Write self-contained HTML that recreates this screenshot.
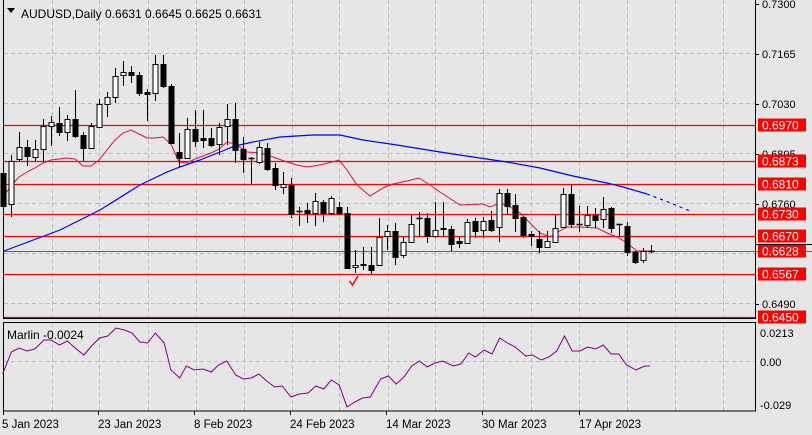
<!DOCTYPE html>
<html><head><meta charset="utf-8"><style>
html,body{margin:0;padding:0;background:#e6e6e6;}
svg{display:block;font-family:"Liberation Sans",sans-serif;}
</style></head><body>
<svg id="s" width="812" height="435" viewBox="0 0 812 435" xmlns="http://www.w3.org/2000/svg">
<rect x="0" y="0" width="812" height="435" fill="#e6e6e6"/>
<g id="grid" stroke="#bdbdbd" stroke-width="1" stroke-dasharray="4,3" fill="none"></g>
<g id="hl"></g>
<line x1="3" y1="251.5" x2="812" y2="251.5" stroke="#666" stroke-width="1"/>
<polyline id="blue" fill="none" stroke="#0000ff" stroke-width="1.2"/>
<polyline id="bluedash" fill="none" stroke="#0000ff" stroke-width="1.2" stroke-dasharray="3,4"/>
<polyline id="red" fill="none" stroke="#e0103c" stroke-width="1"/>
<g id="candles"></g>
<path d="M349.5 281 L352.5 285 L358 276" stroke="#ff0000" stroke-width="1.5" fill="none"/>
<rect x="3.5" y="-1" width="752" height="319.5" fill="none" stroke="#000" stroke-width="1"/>
<rect x="3.5" y="322.5" width="752" height="88.5" fill="none" stroke="#000" stroke-width="1"/>
<polyline id="marlin" fill="none" stroke="#800080" stroke-width="1"/>
<g id="labels" font-size="11" fill="#000"></g>
<path d="M7 8 L15 8 L11 13 Z" fill="#000"/>
<text x="21" y="18" font-size="12" fill="#000">AUDUSD,Daily  0.6631 0.6645 0.6625 0.6631</text>
<text x="7" y="339" font-size="12" fill="#000">Marlin -0.0024</text>
<g font-size="11.5" fill="#000">
<text x="2" y="428">5 Jan 2023</text>
<text x="98" y="428">23 Jan 2023</text>
<text x="194" y="428">8 Feb 2023</text>
<text x="290" y="428">24 Feb 2023</text>
<text x="386" y="428">14 Mar 2023</text>
<text x="482" y="428">30 Mar 2023</text>
<text x="579" y="428">17 Apr 2023</text>
</g>
</svg>
<script>
var NS="http://www.w3.org/2000/svg";
function el(t,a,p){var e=document.createElementNS(NS,t);for(var k in a)e.setAttribute(k,a[k]);if(p)p.appendChild(e);return e;}
var grid=document.getElementById('grid');
var vx=[52,99,148,196,244,292,339,388,435,483,531,579,627,675,723];
vx.forEach(function(x){el('line',{x1:x+.5,y1:0,x2:x+.5,y2:318},grid);el('line',{x1:x+.5,y1:323,x2:x+.5,y2:411},grid);});
[53,103,153,203,253,303].forEach(function(y){el('line',{x1:4,y1:y+.5,x2:755,y2:y+.5},grid);});
el('line',{x1:4,y1:361.5,x2:755,y2:361.5},grid);
var hl=document.getElementById('hl');
[125,161,184,214,236,274,317].forEach(function(y){el('line',{x1:4,y1:y+.5,x2:755,y2:y+.5,stroke:'#ff0000','stroke-width':1.3},hl);});
var lab=document.getElementById('labels');
[[4,'0.7300'],[54,'0.7165'],[104,'0.7030'],[154,'0.6895'],[204,'0.6760'],[304,'0.6490']].forEach(function(a){
el('line',{x1:755,y1:a[0]+.5,x2:759,y2:a[0]+.5,stroke:'#000'},lab);
var t=el('text',{x:762,y:a[0]+4},lab);t.textContent=a[1];});
[[125,'0.6970'],[161,'0.6873'],[184,'0.6810'],[214,'0.6730'],[236,'0.6670'],[251,'0.6628'],[274,'0.6567'],[317,'0.6450']].forEach(function(a){
el('rect',{x:758,y:a[0]-6.5,width:48,height:13,fill:'#ff0000'},lab);
var t=el('text',{x:762,y:a[0]+4.5,fill:'#fff','font-size':12},lab);t.textContent=a[1];});
el('line',{x1:755,y1:244.5,x2:812,y2:244.5,stroke:'#000'},lab);
[[333,'0.0213'],[362,'0.00'],[405,'-0.029']].forEach(function(a){var t=el('text',{x:760,y:a[0]+4},lab);t.textContent=a[1];});
[3,98,194,290,386,482,579].forEach(function(x){el('line',{x1:x+.5,y1:411,x2:x+.5,y2:415,stroke:'#000'},lab);});
// candles: x, open, close, high, low (pixel y)
var C=[[3,173,206,168,212],[11,204,161,155,217],[19,159,147,132,161],[27,147,156,140,166],[35,157,149,140,161],[43,149,126,119,161],[51,126,122,116,146],[59,123,132,107,136],[67,132,119,115,141],[75,119,136,90,138],[83,135,148,132,161],[91,148,126,123,149],[99,127,104,99,128],[107,104,97,92,117],[115,97,76,68,103],[123,75,72,61,86],[131,72,75,66,83],[139,75,93,72,96],[147,92,94,89,121],[155,93,64,55,101],[163,64,86,55,88],[171,86,143,84,143],[179,152,158,133,167],[187,158,129,118,158],[195,129,141,110,147],[203,138,140,110,148],[211,138,145,128,147],[219,144,127,123,155],[227,126,119,104,145],[235,119,150,103,163],[243,149,159,137,173],[251,158,158,157,184],[259,162,147,142,164],[267,148,169,143,171],[275,168,185,163,190],[283,187,184,172,194],[291,185,214,178,218],[299,211,211,207,226],[307,210,213,203,223],[315,213,201,193,226],[323,202,213,200,222],[331,213,198,196,215],[339,207,213,202,215],[347,213,268,207,269],[355,267,265,250,273],[363,264,265,247,270],[371,265,270,247,274],[379,265,237,218,266],[387,236,231,225,250],[395,231,257,223,265],[403,255,242,237,258],[411,242,224,214,243],[419,218,218,212,236],[427,218,236,213,243],[435,236,230,202,238],[443,228,229,202,237],[451,229,244,226,251],[459,241,243,237,248],[467,243,222,219,244],[475,221,231,218,238],[483,230,221,217,238],[491,220,230,211,232],[499,227,193,189,242],[507,193,206,189,215],[515,205,218,194,232],[523,217,235,216,238],[531,234,236,231,246],[539,239,247,231,253],[547,247,241,231,248],[555,242,228,215,243],[563,227,194,188,228],[571,194,224,185,228],[579,224,224,206,232],[587,225,215,206,228],[595,215,220,208,228],[603,219,209,197,228],[611,208,228,207,233],[619,224,224,224,237],[627,226,252,222,256],[635,252,262,251,264],[643,260,251,248,263],[651,251,251,245,253]];
var cg=document.getElementById('candles');
C.forEach(function(c){var x=c[0]+.5;var top=Math.min(c[1],c[2]),bot=Math.max(c[1],c[2]);var bull=c[2]<c[1];
el('line',{x1:x,y1:c[3],x2:x,y2:c[4],stroke:'#000'},cg);
if(bot-top<1){el('line',{x1:x-3,y1:top+.5,x2:x+3,y2:top+.5,stroke:'#000','stroke-width':1.5},cg);}
else el('rect',{x:x-2.5,y:top+.5,width:5,height:bot-top,fill:bull?'#fff':'#000',stroke:'#000'},cg);});
var red=[[3,197],[11,186],[19,177],[27,172],[35,168],[43,163],[51,160],[67,158],[75,159],[83,166],[91,166],[99,160],[107,150],[115,140],[123,133],[131,130],[139,134],[147,138],[155,138],[163,137],[171,144],[179,162],[187,163],[195,159],[203,156],[211,153],[219,149],[227,142],[235,144],[247,152],[260,153],[273,157],[287,162],[297,165],[307,167],[320,165],[332,162],[339,160],[347,170],[357,185],[370,196],[383,188],[393,184],[407,181],[419,178],[430,185],[440,192],[460,205],[483,204],[490,207],[500,203],[510,207],[520,213],[530,223],[540,233],[550,237],[558,232],[567,227],[580,227],[597,228],[607,233],[617,237],[627,243],[637,251],[653,251]];
document.getElementById('red').setAttribute('points',red.map(function(p){return p.join(',')}).join(' '));
var blue=[[4,251],[60,230],[100,210],[140,185],[167,172],[180,167],[200,160],[220,152],[235,146],[253,142],[280,137],[313,135],[340,135],[363,140],[397,145],[440,152],[473,157],[507,162],[540,168],[573,176],[607,183],[623,187],[647,194]];
document.getElementById('blue').setAttribute('points',blue.map(function(p){return p.join(',')}).join(' '));
document.getElementById('bluedash').setAttribute('points','647,194 668,202 690,211');
var m=[[5,374],[22,352],[37,348],[52,351],[67,349],[85,340],[98,340],[115,345],[130,341],[145,348],[162,355],[175,347],[192,338],[208,336],[224,328],[240,330],[255,333],[270,342],[285,343],[300,333],[317,343],[330,370],[347,378],[360,366],[375,370],[392,369],[408,372],[422,365],[438,361],[455,375],[470,379],[485,378],[500,374],[515,381],[530,387],[545,386],[562,397],[578,394],[595,393],[610,386],[625,389],[640,380],[655,385],[670,407],[685,402],[700,398],[715,397],[735,379],[750,376],[765,384],[780,377],[795,366],[810,361],[825,367],[840,363],[855,361],[875,366],[890,364],[905,353],[918,357],[935,350],[950,354],[965,338],[980,343],[995,347],[1015,356],[1028,355],[1045,360],[1060,357],[1075,351],[1090,336],[1105,351],[1120,351],[1135,347],[1150,349],[1165,345],[1180,354],[1195,354],[1210,365],[1228,370],[1245,366],[1255,366]];
document.getElementById('marlin').setAttribute('points',m.map(function(p){return (p[0]*812/1568).toFixed(1)+','+p[1]}).join(' '));
</script>
</body></html>
